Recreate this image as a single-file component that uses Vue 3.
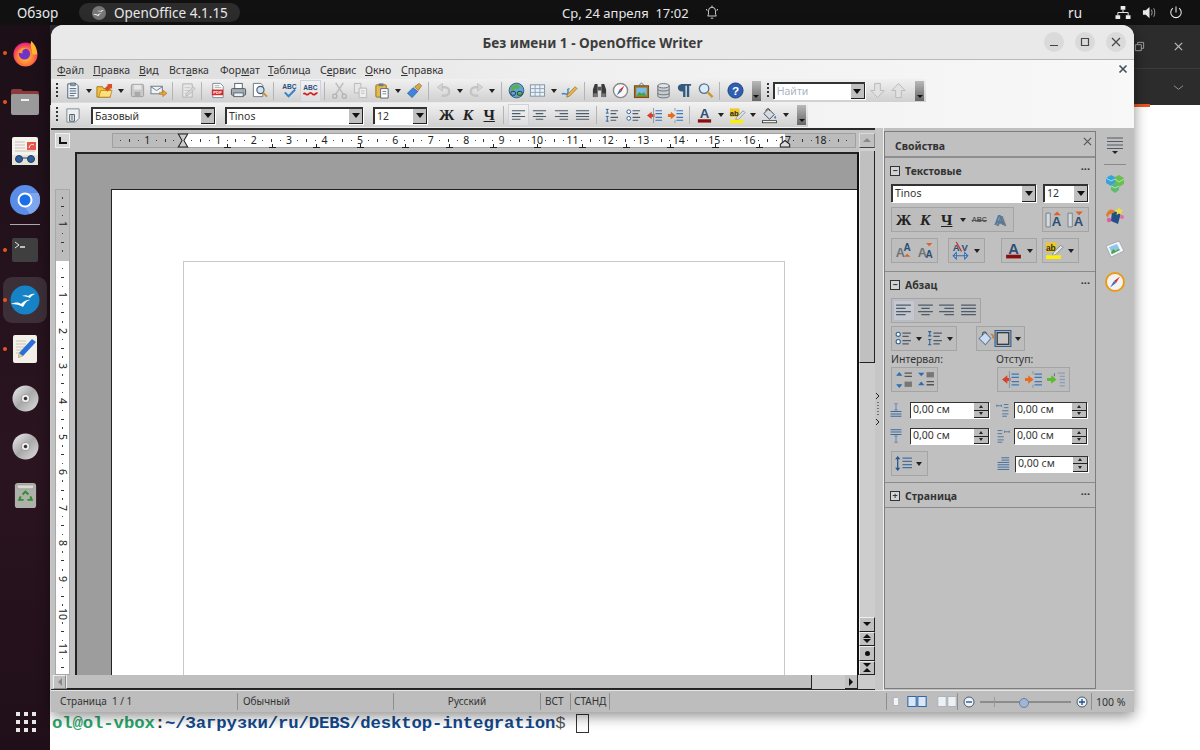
<template>
  <div class="screen">
    <!-- icon sprite, icons with letters live in textIcons below -->
    <svg class="sprite" aria-hidden="true">
      <defs>
        <radialGradient id="ffx" cx="0.5" cy="0.6" r="0.6"><stop offset="0" stop-color="#ffcf3a"/><stop offset="0.6" stop-color="#ff7139"/><stop offset="1" stop-color="#e31587"/></radialGradient>
        <linearGradient id="metal" x1="0" y1="0" x2="1" y2="1"><stop offset="0" stop-color="#f0f0f0"/><stop offset="0.5" stop-color="#a9a9a9"/><stop offset="1" stop-color="#e0e0e0"/></linearGradient>
      </defs>
      <symbol id="new" viewBox="0 0 18 18"><path d="M4 2h9l2 2v13H4z" fill="#f4f7fa" stroke="#4c5f72"/><path d="M6 7h7M6 9.5h7M6 12h7M6 14.5h5" stroke="#44607c"/><path d="M7 1h5v3H7z" fill="#8aa0b6" stroke="#3d4f60" stroke-width=".6"/></symbol>
      <symbol id="open" viewBox="0 0 18 18"><path d="M1 5h6l1 2h7v9H1z" fill="#f0c040" stroke="#a87a10"/><path d="M3 16l2-7h12l-2 7z" fill="#fbe07c" stroke="#a87a10" stroke-width=".7"/><path d="M9 7l4-4-2-1h6v6l-1-2-4 4z" fill="#d8502a"/></symbol>
      <symbol id="save" viewBox="0 0 18 18"><rect x="2.5" y="2.5" width="13" height="13" rx="1.5" fill="#c9c9c9" stroke="#9d9d9d"/><rect x="5" y="3" width="8" height="5" fill="#e6e6e6"/><rect x="6" y="10.5" width="6" height="5" fill="#a9a9a9"/></symbol>
      <symbol id="mail" viewBox="0 0 18 18"><rect x="1" y="4.5" width="12" height="8" fill="#f1f4f7" stroke="#6d7a87"/><path d="M1 5l6 4 6-4" fill="none" stroke="#6d7a87"/><path d="M10 11h3.500V8.500L18 12l-4.500 3.500V13H10z" fill="#eba033" stroke="#9d6a15" stroke-width=".5"/></symbol>
      <symbol id="edit" viewBox="0 0 18 18"><path d="M4 2h10v14H4z" fill="#e8e8e8" stroke="#b2b2b2"/><path d="M6 6h6M6 9h6M6 12h4" stroke="#c4c4c4"/><path d="M8 12l7-7 2 2-7 7-3 1z" fill="#d4d4d4" stroke="#aaa" stroke-width=".6"/></symbol>
      <symbol id="print" viewBox="0 0 18 18"><rect x="5" y="1.500" width="8" height="6" fill="#fff" stroke="#56626e"/><rect x="1.500" y="7" width="15" height="7" rx="1" fill="#a7b0b8" stroke="#4c5862"/><rect x="4" y="11.500" width="10" height="4" fill="#eef0f2" stroke="#56626e"/><circle cx="14" cy="9" r=".8" fill="#5cc45c"/></symbol>
      <symbol id="preview" viewBox="0 0 18 18"><path d="M2.500 1.500h8l2 2v12h-10z" fill="#fff" stroke="#6a7885"/><circle cx="10" cy="8.500" r="3.800" fill="#cfe4f5" stroke="#46586a" stroke-width="1.200"/><path d="M13 11.500l4 4" stroke="#c9962a" stroke-width="2.200"/></symbol>
      <symbol id="cut" viewBox="0 0 18 18"><path d="M5 1l8 12M13 1L5 13" stroke="#bdbdbd" stroke-width="1.600"/><circle cx="4" cy="15" r="2.200" fill="none" stroke="#b0b0b0" stroke-width="1.300"/><circle cx="14" cy="15" r="2.200" fill="none" stroke="#b0b0b0" stroke-width="1.300"/></symbol>
      <symbol id="copy" viewBox="0 0 18 18"><path d="M2.500 1.500h7v10h-7z" fill="#e6e6e6" stroke="#b8b8b8"/><path d="M7.500 6.500h8v10h-8z" fill="#eee" stroke="#b8b8b8"/><path d="M9.500 9.500h4M9.500 12h4" stroke="#c4c4c4"/></symbol>
      <symbol id="paste" viewBox="0 0 18 18"><rect x="2" y="3" width="11" height="13" rx="1" fill="#e5b94f" stroke="#977016"/><rect x="5" y="1.500" width="5" height="3" fill="#6d7b88"/><path d="M7 7h8v10H7z" fill="#fff" stroke="#566573"/><path d="M9 10h4M9 12.500h4" stroke="#6f7f8f"/></symbol>
      <symbol id="brush" viewBox="0 0 18 18"><path d="M1.500 12l6-6 5 4-6 6.500z" fill="#3f84d6" stroke="#1f5a9e" stroke-width=".7"/><path d="M9 5l5-3.500 2.500 2.500-3.500 5z" fill="#d9a64b" stroke="#8c6519" stroke-width=".7"/></symbol>
      <symbol id="undo" viewBox="0 0 18 18"><path d="M7 5.500h3.500a4.500 4.500 0 010 9H7" fill="none" stroke="#c4c4c4" stroke-width="2.600"/><path d="M8 1.500v8L2.500 5.500z" fill="#d4d4d4" stroke="#b2b2b2" stroke-width=".6"/></symbol>
      <symbol id="redo" viewBox="0 0 18 18"><path d="M11 5.500H7.500a4.500 4.500 0 000 9H11" fill="none" stroke="#c4c4c4" stroke-width="2.600"/><path d="M10 1.500v8l5.500-4z" fill="#d4d4d4" stroke="#b2b2b2" stroke-width=".6"/></symbol>
      <symbol id="nav" viewBox="0 0 18 18"><circle cx="9" cy="9" r="7.800" fill="#5fa6d8" stroke="#3a5a75"/><path d="M3 5c3-2 5-3 8-2l2 3-3 2-2-1-2 2-3 0zM9 11h6l-2 4-3 1z" fill="#5cae54"/><rect x="3" y="10" width="5" height="4" rx="1.500" fill="none" stroke="#283845"/><rect x="10" y="10" width="5" height="4" rx="1.500" fill="none" stroke="#283845"/></symbol>
      <symbol id="table" viewBox="0 0 18 18"><rect x="1.500" y="3" width="15" height="12" fill="#edf2f7" stroke="#7a91a8"/><path d="M1.500 7h15M1.500 11h15M6.500 3v12M11.500 3v12" stroke="#8aa1b8"/></symbol>
      <symbol id="draw" viewBox="0 0 18 18"><path d="M1 13c3-3 4 2 6-1s-2-4 2-5" fill="none" stroke="#3a82d2" stroke-width="1.500"/><path d="M7 13l8-8 2 2-8 8-3 1z" fill="#e9b748" stroke="#8f6510" stroke-width=".7"/></symbol>
      <symbol id="binoc" viewBox="0 0 18 18"><path d="M2 8l2-6h3v14H2zM16 8l-2-6h-3v14h5z" fill="#3a3a3a"/><rect x="7" y="5" width="4" height="4" fill="#555"/><rect x="2.500" y="12" width="4" height="4" fill="#777"/><rect x="11.500" y="12" width="4" height="4" fill="#777"/></symbol>
      <symbol id="compass" viewBox="0 0 18 18"><circle cx="9" cy="9" r="7.500" fill="#fafafa" stroke="#888" stroke-width="1.500"/><path d="M13 4L8 8l2 2z" fill="#d52d2d"/><path d="M5 14l3-6 2 2z" fill="#3b70b9"/></symbol>
      <symbol id="gallery" viewBox="0 0 18 18"><rect x="1.500" y="4" width="15" height="12.500" fill="#a97022" stroke="#6e4a12"/><rect x="3.500" y="6" width="11" height="8.500" fill="#79bce8"/><path d="M3.500 14.500l3-4 3 2 2-2 3 4z" fill="#4e9f3d"/><path d="M6 4l3-3 3 3" fill="none" stroke="#666"/></symbol>
      <symbol id="db" viewBox="0 0 18 18"><path d="M3 4v11c0 2.400 12 2.400 12 0V4z" fill="#c9ced3" stroke="#666d74"/><ellipse cx="9" cy="4" rx="6" ry="2.300" fill="#e2e5e8" stroke="#666d74"/><path d="M3 8c0 2 12 2 12 0M3 12c0 2 12 2 12 0" fill="none" stroke="#666d74"/></symbol>
      <symbol id="pilcrow" viewBox="0 0 18 18"><path d="M7 2h9v2h-2v12h-2.500V4H10v12H7.500V10C3 10 2 7.500 2 6s1-4 5-4z" fill="#34597f"/></symbol>
      <symbol id="zoom" viewBox="0 0 18 18"><circle cx="7.500" cy="7" r="5" fill="#d9ecfa" stroke="#59708a" stroke-width="1.400"/><path d="M11 10.500l5.500 5.500" stroke="#c99a2c" stroke-width="2.500"/></symbol>
      <symbol id="al" viewBox="0 0 18 18"><path d="M2 4h14M2 7h9M2 10h14M2 13h9" stroke="#4d5c6b" stroke-width="1.200"/></symbol>
      <symbol id="ac" viewBox="0 0 18 18"><path d="M2 4h14M5 7h8M2 10h14M5 13h8" stroke="#4d5c6b" stroke-width="1.200"/></symbol>
      <symbol id="ar" viewBox="0 0 18 18"><path d="M2 4h14M7 7h9M2 10h14M7 13h9" stroke="#4d5c6b" stroke-width="1.200"/></symbol>
      <symbol id="aj" viewBox="0 0 18 18"><path d="M2 4h14M2 7h14M2 10h14M2 13h14" stroke="#4d5c6b" stroke-width="1.200"/></symbol>
      <symbol id="numl" viewBox="0 0 18 18"><path d="M3 2.500h3M4.500 2.500v4M3 6.500h3M3 10h3M4.500 10v5M3 15h3" stroke="#2e5f96"/><path d="M8 4h8M8 7h6M8 11h8M8 14h6" stroke="#4d5c6b" stroke-width="1.200"/></symbol>
      <symbol id="bull" viewBox="0 0 18 18"><circle cx="4" cy="5" r="2" fill="#fff" stroke="#2e5f96"/><circle cx="4" cy="12" r="2" fill="#fff" stroke="#2e5f96"/><path d="M8 4h8M8 7h6M8 11h8M8 14h6" stroke="#4d5c6b" stroke-width="1.200"/></symbol>
      <symbol id="outd" viewBox="0 0 18 18"><path d="M1 9l5-4v2.500h3v3H6V13z" fill="#d8402a"/><path d="M10 4h7M10 7h7M10 11h7M10 14h7" stroke="#3a78bd" stroke-width="1.200"/><path d="M8 1v16" stroke="#8b98a5"/></symbol>
      <symbol id="indt" viewBox="0 0 18 18"><path d="M9 9L4 5v2.500H1v3h3V13z" fill="#e76b21"/><path d="M10 4h7M10 7h7M10 11h7M10 14h7" stroke="#3a78bd" stroke-width="1.200"/><path d="M8.500 1v3M8.500 14v3" stroke="#8b98a5"/></symbol>
      <symbol id="incr" viewBox="0 0 18 18"><path d="M9 9l-5-4v2.500H0v3h4V13z" fill="#5cba2e"/><path d="M10 3h7M12 6h5M12 9h5M12 12h5M12 15h5" stroke="#8aa0b8" stroke-width="1.200"/><path d="M7 3v3" stroke="#5d6f80"/></symbol>
      <symbol id="bgc" viewBox="0 0 18 18"><path d="M3 7l5-5 6 6-5 5z" fill="#d6dce2" stroke="#37444f"/><path d="M5 4c1-3 4-3 4 0" fill="none" stroke="#37444f"/><path d="M15 9c1.500 2 1.500 3 0 3.500-1.500-.5-1.500-1.500 0-3.500z" fill="#3d80c5"/><rect x="1.500" y="14.500" width="15" height="2.200" fill="#fff" stroke="#222" stroke-width=".8"/></symbol>
      <symbol id="down" viewBox="0 0 18 18"><path d="M6 1.500h6V9h4l-7 7.500L2 9h4z" fill="#e2e2e2" stroke="#b9b9b9"/></symbol>
      <symbol id="up" viewBox="0 0 18 18"><path d="M6 16.500h6V9h4L9 1.500 2 9h4z" fill="#e2e2e2" stroke="#b9b9b9"/></symbol>
      <symbol id="fill" viewBox="0 0 18 18"><path d="M2 9l6-6 5 6-5 6z" fill="#cbdcf0" stroke="#5f7d9e"/><path d="M5 6c0-4 4-4 4-1" fill="none" stroke="#555"/><path d="M13 5c2 0 3 2 2 4" fill="none" stroke="#d6762e" stroke-width="1.500"/></symbol>
      <symbol id="box" viewBox="0 0 18 18"><rect x="1" y="1.500" width="15" height="15" fill="none" stroke="#27578d"/><rect x="3" y="3.500" width="11" height="11" fill="#c5c5c5" stroke="#333" stroke-width="1.200"/></symbol>
      <symbol id="spup" viewBox="0 0 18 18"><path d="M5 2L2 5.500h6z" fill="#2e6cb3"/><path d="M5 17l-3-3.500h6z" fill="#2e6cb3"/><path d="M10 3h7M10 6h7" stroke="#555" stroke-width="1.300"/><path d="M10 11h7v5h-7z" fill="#777"/></symbol>
      <symbol id="spdn" viewBox="0 0 18 18"><path d="M5 6L2 2.500h6zM5 11l-3 3.500h6z" fill="#2e6cb3"/><path d="M10 2h7v5h-7z" fill="#777"/><path d="M10 11h7M10 14h7" stroke="#555" stroke-width="1.300"/></symbol>
      <symbol id="before" viewBox="0 0 18 18"><path d="M7 1h4M9 1v8M7 9h4" stroke="#4b78a8"/><path d="M2 11h14M2 14h14M2 17h14" stroke="#3b6a9e" stroke-width="1.300"/></symbol>
      <symbol id="after" viewBox="0 0 18 18"><path d="M2 1h14M2 4h14M2 7h14" stroke="#3b6a9e" stroke-width="1.300"/><path d="M7 9h4M9 9v8M7 17h4" stroke="#4b78a8"/></symbol>
      <symbol id="left" viewBox="0 0 18 18"><path d="M1 2v3M1 3.500h6M7 2v3" stroke="#446f9e"/><path d="M10 2h6M10 6h6M8 10h8M8 14h8M8 17h6" stroke="#4a739c" stroke-width="1.200"/></symbol>
      <symbol id="right" viewBox="0 0 18 18"><path d="M11 2v3M11 3.500h6M17 2v3" stroke="#446f9e"/><path d="M2 2h6M2 6h6M2 10h8M2 14h8M2 17h6" stroke="#4a739c" stroke-width="1.200"/></symbol>
      <symbol id="first" viewBox="0 0 18 18"><path d="M7 1h10M7 4h10M2 7h15M2 10h15M2 13h15M2 16h15" stroke="#3b6a9e" stroke-width="1.200"/></symbol>
      <symbol id="lines" viewBox="0 0 18 18"><path d="M3.500 3v12" stroke="#27578d" stroke-width="1.200"/><path d="M1 5l2.500-3L6 5zM1 13l2.500 3L6 13z" fill="#27578d"/><path d="M8 4h9M8 7h9M8 10h9M8 13h9" stroke="#456f9d" stroke-width="1.200"/></symbol>
      <symbol id="cube" viewBox="0 0 20 20"><path d="M1 5l5-3 4 2v6l-4 3-5-3z" fill="#37a4d8"/><path d="M10 4l4-2 5 3v6l-5 3-4-3z" fill="#6cc04a"/><path d="M6 12l4-2 4 2v5l-4 3-4-3z" fill="#5bbd6c"/><path d="M1 5l5 3 4-2M10 6l4 3 5-3M6 13l4 2 4-2" fill="none" stroke="#d6eef6" stroke-width=".7"/></symbol>
      <symbol id="stars" viewBox="0 0 20 20"><path d="M7 5l9 2-3 11-7-3z" fill="#254f86"/><path d="M1 9c2-6 7-7 9-3l-4 2c-2 0-3 2-3 4z" fill="#de7c2c"/><path d="M14 1l1 2.500 3 .5-2 2 .5 3-2.500-1.500L11.500 9l.5-3-2-2 3-.5z" fill="#ece03c"/><circle cx="4" cy="14" r="2.200" fill="#de5ea0"/><circle cx="17" cy="11" r="2" fill="#e66ba8"/></symbol>
      <symbol id="photo" viewBox="0 0 20 20"><path d="M1 7l13-5 5 10-13 6z" fill="#f4f6f8" stroke="#98a2ac" stroke-width=".8"/><path d="M4 8l8-3 3 6-8 4z" fill="#8ec6ea"/><path d="M6 14l2-4 3 2 2-2 2 1-8 4z" fill="#52a347"/></symbol>
      <symbol id="orange-compass" viewBox="0 0 20 20"><circle cx="10" cy="10" r="9" fill="#f3f3f3" stroke="#ec9a16" stroke-width="2"/><path d="M15 4.500L9 9l2 2z" fill="#d62f2f"/><path d="M5 15.500L9 9l2 2z" fill="#3673ba"/></symbol>
      <symbol id="hamb" viewBox="0 0 20 20"><path d="M2 2h16M2 5.500h16M2 9h16M2 12.500h16" stroke="#555c63" stroke-width="1.200"/><path d="M7 15h6l-3 3z" fill="#222"/></symbol>
      <!-- dock -->
      <symbol id="d-firefox" viewBox="0 0 28 28"><circle cx="14" cy="15" r="12.500" fill="url(#ffx)"/><path d="M20 1c5 5 6 9 6 14h-5c0-6-3-8-1-14z" fill="#ffb52e"/><circle cx="13" cy="14.500" r="5.800" fill="#6f33c8"/><path d="M6 13c2-4 5-6 10-4-4 0-6 2-5 5z" fill="#ff9a3a"/></symbol>
      <symbol id="d-files" viewBox="0 0 28 28"><path d="M0 3a2 2 0 012-2h8l2 2h14a2 2 0 012 2v5H0z" fill="#8b3a3c"/><rect x="0" y="6" width="28" height="21" rx="2" fill="#9a9a9a"/><rect x="10" y="11" width="8" height="2" fill="#f1f1f1"/></symbol>
      <symbol id="d-viewer" viewBox="0 0 28 28"><rect x="1" y="0" width="26" height="28" rx="2" fill="#f6f3ee"/><path d="M4 5h10M4 8h10M4 11h10M4 14h20" stroke="#c6c0b6"/><rect x="16" y="5" width="9" height="8" fill="#e6554a"/><path d="M18 11c1-4 3-4 5-3" fill="none" stroke="#fff"/><rect x="1" y="18" width="26" height="10" fill="#e7e2d6"/><circle cx="8" cy="22" r="3.500" fill="#2f5f9a" stroke="#1c3e6d"/><circle cx="20" cy="22" r="3.500" fill="#2f5f9a" stroke="#1c3e6d"/><path d="M11 21h6" stroke="#1c3e6d"/></symbol>
      <symbol id="d-chrome" viewBox="0 0 30 30"><circle cx="15" cy="15" r="15" fill="#5a8de8"/><path d="M15 8h13.500A15 15 0 0120 29L15 22z" fill="#7ea6ef"/><circle cx="15" cy="15" r="7.500" fill="#fff"/><circle cx="15" cy="15" r="5.500" fill="#1a6fe8"/></symbol>
      <symbol id="d-term" viewBox="0 0 26 24"><rect x="0" y="0" width="26" height="24" rx="2" fill="#3f3f3f"/><path d="M3 4l4 3-4 3" fill="none" stroke="#e8e8e8"/><path d="M8 9h5" stroke="#e8e8e8" stroke-width="1.500"/></symbol>
      <symbol id="d-ooo" viewBox="0 0 30 30"><circle cx="15" cy="15" r="14.500" fill="#1583c6"/><path d="M1 19c4-2 8-2 10 0 2-2 6-5 9-4-4 1-5 4-7 7-3-2-7-3-12-3z" fill="#fff"/><path d="M12 11c2-1 5-1 6 0 2-1 4-3 7-2-3 1-4 3-5 4-2-1-5-2-8-2z" fill="#fff"/></symbol>
      <symbol id="d-writer" viewBox="0 0 26 28"><rect x="1" y="0" width="24" height="28" rx="2" fill="#f3f0e8"/><path d="M4 6h10M4 9h10M4 12h10M4 15h8M4 18h7" stroke="#c9c4b8"/><path d="M6 23l1-5L20 4l4 3L11 21z" fill="#2a70d8"/><path d="M6 23l1-5 4 3z" fill="#efc48a"/></symbol>
      <symbol id="d-cd" viewBox="0 0 28 28"><circle cx="14" cy="14" r="13.500" fill="url(#metal)"/><circle cx="14" cy="14" r="4.200" fill="#eee" stroke="#999"/><circle cx="14" cy="14" r="1.800" fill="#333"/></symbol>
      <symbol id="d-trash" viewBox="0 0 24 28"><rect x="1" y="1" width="22" height="26" rx="3" fill="#aeb0aa"/><path d="M3 3h18l-1 4H4z" fill="#d9d9d4" stroke="#8b8d87" stroke-width=".6"/><g fill="none" stroke="#2d8e2d" stroke-width="2"><path d="M9 13l3-3 3 3"/><path d="M17 15l1.500 3.500H14"/><path d="M10 18.500H5.500L7 15"/></g></symbol>
    </svg>

    <header class="topbar">
      <span class="activities">Обзор</span>
      <span class="app-pill">
        <svg class="pill-icon" viewBox="0 0 30 30"><circle cx="15" cy="15" r="15" fill="#777"/><path d="M2 18c4-1 8-1 10 1 2-2 6-5 9-4-4 1-5 4-7 7-3-2-7-3-12-4zM12 11c2-1 5-1 6 0 2-1 4-3 7-2-3 1-4 3-5 4-2-1-5-2-8-2z" fill="#eee"/></svg>
        OpenOffice 4.1.15
      </span>
      <span class="clock">Ср, 24 апреля &nbsp;17:02</span>
      <svg class="bell" viewBox="0 0 16 18" fill="none" stroke="#e6e6e6"><path d="M3 13c1-1 1-2 1-6a4 4 0 018 0c0 4 0 5 1 6zM6.500 15.500h3M8 1v2M1.500 5l1 2M14.500 5l-1 2"/></svg>
      <span class="tray">
        <span class="lang">ru</span>
        <svg viewBox="0 0 16 16" class="tray-net"><path d="M5.500 1h5v4h-5zM0 11h5v4H0zM11 11h5v4h-5z" fill="#eee"/><path d="M8 5v3M2.500 11V8h11v3" fill="none" stroke="#eee"/></svg>
        <svg viewBox="0 0 16 16" class="tray-vol"><path d="M1 5.500h3L8 2v12l-4-3.500H1z" fill="#e8e8e8"/><path d="M10 5c1 2 1 4 0 6M12.500 3.500c1.500 3 1.500 6 0 9" fill="none" stroke="#aaa"/></svg>
        <svg viewBox="0 0 16 16" class="tray-pow" fill="none" stroke="#e8e8e8" stroke-width="1.200"><path d="M8 1v7M4.500 3a6 6 0 107 0"/></svg>
      </span>
    </header>

    <div class="below">
      <nav class="dock">
        <div v-for="(d, n) in dock" :key="n" class="dock-slot" :style="{ height: d.h + 'px' }" :class="{ active: d.active }">
          <i v-if="d.dot" class="dot"></i>
          <svg class="dock-ic" :style="{ width: d.w + 'px', height: d.w + 'px' }"><use :href="'#' + d.icon" /></svg>
          <i v-if="d.rule" class="dock-rule"></i>
        </div>
        <div class="apps-grid"><i v-for="n in 9" :key="n"></i></div>
      </nav>

      <main class="desktop">
        <!-- terminal behind the writer -->
        <section class="terminal">
          <div class="term-head">
            <div class="term-head-row">
              <svg class="term-btn" viewBox="0 0 12 12" fill="none" stroke="#aaa"><path d="M1.500 4h6.500v6.500H1.500zM4 4V1.500h6.500V8H8"/></svg>
              <svg class="term-btn" viewBox="0 0 12 12" fill="none" stroke="#bbb" stroke-width="1.300"><path d="M2 2l8 8M10 2l-8 8"/></svg>
            </div>
            <div class="term-head-row second">
              <svg class="term-btn" viewBox="0 0 12 12" fill="none" stroke="#999"><path d="M1 4l5 4 5-4"/></svg>
            </div>
            <i class="orange-tab"></i>
          </div>
          <div class="term-body">
            <div class="prompt"><span class="p-user">ol@ol-vbox</span>:<span class="p-path">~/Загрузки/ru/DEBS/desktop-integration</span><span class="p-sign">$</span><i class="cursor"></i></div>
          </div>
        </section>

        <!-- writer window -->
        <section class="writer">
          <div class="titlebar">
            <span class="win-title">Без имени 1 - OpenOffice Writer</span>
            <div class="win-btns">
              <span class="win-btn"><svg viewBox="0 0 12 12"><path d="M2 9.500h8" stroke="#444" stroke-width="1.200"/></svg></span>
              <span class="win-btn"><svg viewBox="0 0 12 12"><path d="M2.500 2.500h7v7h-7z" fill="none" stroke="#444" stroke-width="1.200"/></svg></span>
              <span class="win-btn"><svg viewBox="0 0 12 12"><path d="M2 2l8 8M10 2l-8 8" stroke="#444" stroke-width="1.200"/></svg></span>
            </div>
          </div>

          <div class="chrome">
            <div class="menubar">
              <span v-for="m in menus" :key="m.t" class="menu-item" :style="{ width: m.w + 'px' }"><span>{{ m.t.slice(0, m.u) }}</span><u>{{ m.t[m.u] }}</u><span>{{ m.t.slice(m.u + 1) }}</span></span>
              <svg class="doc-close" viewBox="0 0 10 10"><path d="M1.500 1.500l7 7M8.500 1.500l-7 7" stroke="#46535f" stroke-width="1.700"/></svg>
            </div>

            <div class="toolbar bar-one">
              <i class="grip"></i>
              <template v-for="(t, i) in row1" :key="i">
                <i v-if="t.sep" class="sep"></i>
                <i v-else-if="t.dd" class="dd"></i>
                <span v-else class="tool" :class="{ on: t.on }"><Ic :name="t.icon" /></span>
              </template>
              <span class="overflow"></span>
              <i class="grip second"></i>
              <span class="combo find"><span class="combo-text muted">Найти</span><b class="combo-arrow"></b></span>
              <span class="tool find-arrow"><Ic name="down" /></span>
              <span class="tool"><Ic name="up" /></span>
              <span class="overflow end"></span>
            </div>

            <div class="toolbar bar-two">
              <i class="grip"></i>
              <span class="tool style-ic"><Ic name="style" /></span>
              <span class="combo c-style"><span class="combo-text">Базовый</span><b class="combo-arrow"></b></span>
              <span class="combo c-font"><span class="combo-text">Tinos</span><b class="combo-arrow"></b></span>
              <span class="combo c-size"><span class="combo-text">12</span><b class="combo-arrow"></b></span>
              <span class="tool letter first-letter"><b>Ж</b></span>
              <span class="tool letter"><b><em>К</em></b></span>
              <span class="tool letter"><b><u>Ч</u></b></span>
              <template v-for="(t, i) in row2" :key="i">
                <i v-if="t.sep" class="sep"></i>
                <i v-else-if="t.dd" class="dd"></i>
                <span v-else class="tool" :class="{ on: t.on }"><Ic :name="t.icon" /></span>
              </template>
              <span class="overflow end two"></span>
            </div>
          </div>

          <div class="workspace">
            <div class="docarea">
              <div class="corner"><i></i></div>
              <div class="hruler">
                <div v-for="(c, i) in hCells" :key="i" class="r-cell">
                  <i class="r-dot"></i><i class="r-mid"></i><i class="r-dot"></i><span class="r-num">{{ c }}</span>
                </div>
                <i v-for="x in tabs" :key="x" class="tabstop" :style="{ left: x + 'px' }"></i>
                <svg class="indent" viewBox="0 0 12 16"><path d="M1 1h10L7 8l4 7H1l4-7z" fill="#ccc" stroke="#222" stroke-width="1.100"/></svg>
                <svg class="indent right" viewBox="0 0 12 16"><path d="M6 8l5 4v3H1v-3z" fill="#ddd" stroke="#222" stroke-width="1.100"/></svg>
              </div>
              <div class="vscroll">
                <span class="sb-btn plain"><i class="tri up"></i></span>
                <span class="sb-thumb"></span>
                <span class="sb-track"></span>
                <span class="sb-btn"><i class="tri"></i></span>
                <span class="sb-btn"><i class="tri up dbl"></i><i class="tri"></i></span>
                <span class="sb-btn"><i class="nav-dot"></i></span>
                <span class="sb-btn"><i class="tri dbl"></i><i class="tri up"></i></span>
              </div>
              <div class="vruler">
                <div v-for="(c, i) in vCells" :key="i" class="v-cell">
                  <i class="r-dot"></i><i class="v-mid"></i><i class="r-dot"></i><span class="v-num">{{ c }}</span>
                </div>
              </div>
              <div class="view">
                <div class="page"><div class="frame"></div></div>
              </div>
              <div class="hscroll">
                <span class="hs-btn left"><i class="tri-h"></i></span>
                <span class="hs-thumb"></span>
                <span class="hs-track"></span>
                <span class="hs-btn right"><i class="tri-h r"></i></span>
              </div>
            </div>

            <div class="splitter">
              <svg viewBox="0 0 6 34" fill="none" stroke="#222"><path d="M1 1l3 3-3 3M1 27l3 3-3 3"/><path d="M3 10v15" stroke-dasharray="1 2"/></svg>
            </div>

            <aside class="deck">
              <div class="deck-head">
                <span>Свойства</span>
                <svg viewBox="0 0 10 10"><path d="M1 1l8 8M9 1l-8 8" stroke="#555" stroke-width="1.300"/></svg>
              </div>

              <div class="section s-text">
                <div class="sec-title"><i class="toggle">−</i><b>Текстовые</b><span class="more">···</span></div>
                <div class="row">
                  <span class="combo s-font"><span class="combo-text">Tinos</span><b class="combo-arrow"></b></span>
                  <span class="combo s-size"><span class="combo-text">12</span><b class="combo-arrow"></b></span>
                </div>
                <div class="row between">
                  <span class="group">
                    <span class="g-tool letter"><b>Ж</b></span>
                    <span class="g-tool letter"><b><em>К</em></b></span>
                    <span class="g-tool letter"><b><u>Ч</u></b></span>
                    <i class="dd"></i>
                    <span class="g-tool abc">ABC</span>
                    <span class="g-tool"><Ic name="shadowa" /></span>
                  </span>
                  <span class="group">
                    <span class="g-tool"><Ic name="growr" /></span>
                    <span class="g-tool"><Ic name="shrinkr" /></span>
                  </span>
                </div>
                <div class="row">
                  <span class="group"><span class="g-tool"><Ic name="sup" /></span><span class="g-tool"><Ic name="sub" /></span></span>
                  <span class="group m10"><span class="g-tool"><Ic name="spacing" /></span><i class="dd"></i></span>
                  <span class="group m16"><span class="g-tool"><Ic name="fcol" /></span><i class="dd"></i></span>
                  <span class="group m5"><span class="g-tool"><Ic name="hl" /></span><i class="dd"></i></span>
                </div>
              </div>

              <div class="section s-para">
                <div class="sec-title"><i class="toggle">−</i><b>Абзац</b><span class="more">···</span></div>
                <div class="row tight">
                  <span class="group">
                    <span class="g-tool on"><Ic name="al" /></span>
                    <span class="g-tool"><Ic name="ac" /></span>
                    <span class="g-tool"><Ic name="ar" /></span>
                    <span class="g-tool"><Ic name="aj" /></span>
                  </span>
                </div>
                <div class="row list-row">
                  <span class="group"><span class="g-tool lst"><Ic name="bull" /></span><i class="dd"></i><span class="g-tool lst"><Ic name="numl" /></span><i class="dd"></i></span>
                  <span class="group m19"><span class="g-tool narrow"><Ic name="fill" /></span><span class="g-tool narrow"><Ic name="box" /></span><i class="dd"></i></span>
                </div>
                <div class="labels"><span class="lab-a">Интервал:</span><span>Отступ:</span></div>
                <div class="row indents">
                  <span class="group"><span class="g-tool"><Ic name="spup" /></span><span class="g-tool"><Ic name="spdn" /></span></span>
                  <span class="group"><span class="g-tool wide"><Ic name="outd" /></span><span class="g-tool wide"><Ic name="indt" /></span><span class="g-tool wide"><Ic name="incr" /></span></span>
                </div>
                <div class="spins">
                  <Ic class="sp-ic" name="before" />
                  <span class="spin sp-l"><span>0,00 см</span><b class="spin-btns"><i></i><i></i></b></span>
                  <Ic class="sp-ic sp-right" name="left" />
                  <span class="spin sp-r"><span>0,00 см</span><b class="spin-btns"><i></i><i></i></b></span>
                  <Ic class="sp-ic" name="after" />
                  <span class="spin sp-l"><span>0,00 см</span><b class="spin-btns"><i></i><i></i></b></span>
                  <Ic class="sp-ic sp-right" name="right" />
                  <span class="spin sp-r"><span>0,00 см</span><b class="spin-btns"><i></i><i></i></b></span>
                </div>
                <div class="last-row">
                  <span class="group"><span class="g-tool"><Ic name="lines" /></span><i class="dd"></i></span>
                  <Ic class="sp-ic first-ic" name="first" />
                  <span class="spin sp-r"><span>0,00 см</span><b class="spin-btns"><i></i><i></i></b></span>
                </div>
              </div>

              <div class="section s-page">
                <div class="sec-title"><i class="toggle">+</i><b>Страница</b><span class="more">···</span></div>
              </div>
            </aside>

            <div class="tabbar">
              <svg class="tab-ic hamb"><use href="#hamb" /></svg>
              <i class="tab-rule"></i>
              <svg class="tab-ic"><use href="#cube" /></svg>
              <svg class="tab-ic"><use href="#stars" /></svg>
              <svg class="tab-ic"><use href="#photo" /></svg>
              <svg class="tab-ic"><use href="#orange-compass" /></svg>
            </div>
          </div>

          <footer class="statusbar">
            <span class="st st-page">Страница &nbsp;1 / 1</span>
            <span class="st st-style">Обычный</span>
            <span class="st st-lang">Русский</span>
            <span class="st st-ins">ВСТ</span>
            <span class="st st-std">СТАНД</span>
            <span class="st st-gap"></span>
            <span class="st st-views">
              <svg viewBox="0 0 12 14"><path d="M2 1h6l2 2v10H2z" fill="#f2f5f8" stroke="#9aa6b2"/></svg>
              <span class="two-pages">
                <svg viewBox="0 0 12 14"><path d="M1 1h10v12H1z" fill="#dbe7f5" stroke="#2f68ad" stroke-width="1.300"/></svg>
                <svg viewBox="0 0 12 14"><path d="M1 1h10v12H1z" fill="#dbe7f5" stroke="#2f68ad" stroke-width="1.300"/></svg>
              </span>
              <span class="two-pages book">
                <svg viewBox="0 0 12 14"><path d="M1 1h10v12H1z" fill="#eef1f4" stroke="#a2adb8"/></svg>
                <svg viewBox="0 0 12 14"><path d="M1 1h10v12H1z" fill="#eef1f4" stroke="#a2adb8"/></svg>
              </span>
            </span>
            <span class="st st-zoom">
              <svg class="z-btn" viewBox="0 0 12 12"><circle cx="6" cy="6" r="5" fill="#eef2f6" stroke="#4c5a68"/><path d="M3 6h6" stroke="#1d4f8c" stroke-width="1.300"/></svg>
              <span class="z-track"><i class="z-mid"></i><i class="z-thumb"></i></span>
              <svg class="z-btn" viewBox="0 0 12 12"><circle cx="6" cy="6" r="5" fill="#eef2f6" stroke="#4c5a68"/><path d="M3 6h6M6 3v6" stroke="#1d4f8c" stroke-width="1.300"/></svg>
            </span>
            <span class="st-pct">100 %</span>
          </footer>
        </section>
      </main>
    </div>
  </div>
</template>

<script setup>
import { h } from 'vue'

const label = (x, y, size, fill, text, extra = '') =>
  `<text x="${x}" y="${y}" text-anchor="middle" font-size="${size}" font-weight="700" fill="${fill}" font-family="Liberation Sans" ${extra}>${text}</text>`

// icons that carry letters, drawn in place so their text stays where it shows
const textIcons = {
  pdf: `<path d="M4 1.500h8l3 3V16.500H4z" fill="#fff" stroke="#7c8891"/><rect x="3" y="8" width="12" height="6" fill="#d42a2a"/>${label(9, 13, 4.5, '#fff', 'PDF')}<path d="M6 4h5M6 6h7" stroke="#a0a8ae"/>`,
  spell: `${label(9, 7.5, 7, '#2a4f7c', 'ABC')}<path d="M4 11l4 4 7-7" fill="none" stroke="#3d83c9" stroke-width="2.200"/>`,
  autospell: `${label(9, 8.5, 7, '#2a4f7c', 'ABC')}<path d="M1.500 13c2-3 3 2 5 0s3-2 5 0 3-2 5-1" fill="none" stroke="#d22020" stroke-width="1.800"/>`,
  help: `<circle cx="9" cy="9" r="8" fill="#2f5fb0" stroke="#1d3f7e"/>${label(9, 13.5, 12.5, '#fff', '?')}`,
  style: `<path d="M3 2h13v10l-4 4H3z" fill="#eef0f2" stroke="#7c8894"/><path d="M6 8h5v7H6z" fill="#f8f8f8" stroke="#40505e"/>${label(8.5, 14, 7, '#40505e', 'i')}`,
  fcol: `${label(9, 12, 14, '#2c4f75', 'A')}<rect x="2" y="13" width="14" height="3.500" fill="#8b0e0e"/>`,
  hl: `<rect x="1" y="1.500" width="10" height="9" fill="#f0c820"/>${label(5.5, 9, 8, '#2b2b2b', 'ab')}<path d="M8 11l7-7 2 2-7 7-3 1z" fill="#dfe4e9" stroke="#6a7885" stroke-width=".7"/><rect x="1" y="13.500" width="14" height="3.500" fill="#ffef00"/>`,
  shadowa: label(8, 14.5, 14, '#4f7ba3', 'A', 'style="filter:drop-shadow(2px 1.500px 0 #70767c)"'),
  growr: `<path d="M1 3h4v13H1z" fill="#d4dae0" stroke="#6a7884" stroke-width=".8"/>${label(11, 15.5, 12.5, '#2c4f75', 'A')}<path d="M8 5l3.500-3.500L15 5z" fill="#d8642a"/>`,
  shrinkr: `<path d="M1 3h4v13H1z" fill="#d4dae0" stroke="#6a7884" stroke-width=".8"/>${label(11, 15.5, 12.5, '#2c4f75', 'A')}<path d="M8 1.500L11.500 5 15 1.500z" fill="#d8642a"/>`,
  sup: `${label(6, 15, 12, '#6d7378', 'A')}${label(12.5, 9, 9.5, '#2c4f75', 'A')}<path d="M9.500 15l3-3 3 3z" fill="#d8642a"/>`,
  sub: `${label(6, 15, 12, '#6d7378', 'A')}${label(12.5, 16, 9.5, '#2c4f75', 'A')}<path d="M9.500 2l3 3 3-3z" fill="#d8642a"/>`,
  spacing: `${label(5, 9, 9, '#2c4f75', 'A')}${label(13, 9, 9, '#2c4f75', 'V')}<path d="M5 1l5 9" stroke="#d02a2a" stroke-width="1.200"/><path d="M2 14h14M2 14l3-3v6zM16 14l-3-3v6z" fill="#fff" stroke="#2e6cb3"/>`,
}

// small svg icon: sprite reference or in-place letters
const Ic = (props) => h('svg', {
  class: 'ic',
  viewBox: '0 0 18 18',
  innerHTML: textIcons[props.name] || `<use href="#${props.name}"/>`,
})
Ic.props = ['name']

// parse a compact toolbar spec: "name", "name+" = with drop arrow, "|" = separator, "!" suffix = highlighted
function parseBar(spec) {
  const out = []
  for (const word of spec.split(' ')) {
    if (word === '|') { out.push({ sep: true }); continue }
    out.push({ icon: word.replace(/[!+]/g, ''), on: word.includes('!') })
    if (word.includes('+')) out.push({ dd: true })
  }
  return out
}

const row1 = parseBar('new+ open+ save mail | edit | pdf print preview | spell autospell! | cut copy paste+ brush | undo+ redo+ | nav table+ draw | binoc compass gallery db pilcrow zoom | help')
const row2 = parseBar('| al! ac ar aj | numl bull outd indt | fcol+ hl+ bgc+')

const menus = [
  { t: 'Файл', u: 0, w: 36 }, { t: 'Правка', u: 0, w: 46 }, { t: 'Вид', u: 0, w: 30 },
  { t: 'Вставка', u: 3, w: 51 }, { t: 'Формат', u: 3, w: 48 }, { t: 'Таблица', u: 0, w: 52 },
  { t: 'Сервис', u: 1, w: 45 }, { t: 'Окно', u: 0, w: 36 }, { t: 'Справка', u: 0, w: 50 },
]

const dock = [
  { icon: 'd-firefox', h: 48, w: 27, dot: true },
  { icon: 'd-files', h: 50, w: 28, dot: true },
  { icon: 'd-viewer', h: 48, w: 28 },
  { icon: 'd-chrome', h: 50, w: 30, rule: true },
  { icon: 'd-term', h: 50, w: 26, dot: true },
  { icon: 'd-ooo', h: 54, w: 30, dot: true, active: true },
  { icon: 'd-writer', h: 40, w: 28, dot: true },
  { icon: 'd-cd', h: 58, w: 27 },
  { icon: 'd-cd', h: 38, w: 27 },
  { icon: 'd-trash', h: 60, w: 27 },
]

const hCells = ['1', '', '1', '2', '3', '4', '5', '6', '7', '8', '9', '10', '11', '12', '13', '14', '15', '16', '17', '18', '']
const vCells = ['1', '', '1', '2', '3', '4', '5', '6', '7', '8', '9', '10', '11', '']
const tabs = Array.from({ length: 13 }, (_, i) => Math.round(71 + 44.3 * (i + 1)))
</script>

<style>
html, body { margin: 0; background: #fff; overflow: hidden; }
</style>

<style scoped>
.screen {
  width: 1200px;
  height: 750px;
  display: flex;
  flex-direction: column;
  overflow: hidden;
  font-family: "Noto Sans", sans-serif;
  color: #222;
}
.sprite { width: 0; height: 0; position: absolute; }
i { font-style: normal; }

/* top bar */
.topbar {
  height: 25px;
  flex: none;
  background: #111;
  color: #e8e8e8;
  display: flex;
  align-items: center;
  font-size: 13.5px;
  position: relative;
}
.activities { margin-left: 17px; width: 62px; }
.app-pill {
  width: 161px;
  height: 19px;
  border-radius: 10px;
  background: #2c2c2c;
  display: flex;
  align-items: center;
  gap: 8px;
  padding-left: 13px;
  box-sizing: border-box;
}
.pill-icon { width: 14px; height: 14px; flex: none; }
.clock { margin-left: 322px; width: 142px; white-space: nowrap; font-size: 13px; }
.bell { width: 14px; height: 17px; margin-left: 1px; }
.tray { margin-left: auto; display: flex; align-items: center; }
.lang { margin-right: 33px; }
.tray-net { width: 16px; height: 15px; margin-right: 11px; }
.tray-vol { width: 15px; height: 15px; margin-right: 12px; }
.tray-pow { width: 14px; height: 15px; margin-right: 17px; }

.below { flex: 1; display: flex; min-height: 0; }

/* dock */
.dock {
  width: 50px;
  flex: none;
  background: linear-gradient(180deg, #1c0f17, #2a1420 60%, #200f19);
  display: flex;
  flex-direction: column;
  padding-top: 4px;
  box-sizing: border-box;
  position: relative;
}
.dock-slot {
  position: relative;
  display: flex;
  align-items: center;
  justify-content: center;
  flex: none;
}
.dock-slot.active::before {
  content: "";
  position: absolute;
  left: 3px;
  right: 3px;
  top: 2px;
  height: 46px;
  border-radius: 9px;
  background: #3d2f38;
}
.dock-slot.active .dock-ic { margin-top: -4px; }
.dock-slot.active .dot { top: 23px; }
.dock-ic { position: relative; }
.dot {
  position: absolute;
  left: 3px;
  top: calc(50% - 2px);
  width: 4px;
  height: 4px;
  border-radius: 50%;
  background: #e95420;
}
.dock-rule {
  position: absolute;
  left: 10px;
  right: 10px;
  bottom: 0;
  height: 1px;
  background: #aaa;
}
.apps-grid {
  position: absolute;
  left: 16px;
  top: 687px;
  display: grid;
  grid-template-columns: repeat(3, 4px);
  gap: 4px;
}
.apps-grid i { height: 4px; background: #e8e8e8; }

/* desktop + terminal */
.desktop { flex: 1; position: relative; min-width: 0; }
.terminal {
  height: 100%;
  display: flex;
  flex-direction: column;
  background: #fff;
}
.term-head {
  height: 80px;
  background: #2c2c2c;
  flex: none;
  position: relative;
}
.term-head-row {
  height: 43px;
  display: flex;
  align-items: center;
  justify-content: flex-end;
  gap: 28px;
  padding-right: 16px;
  border-bottom: 1px solid #3c3c3c;
}
.term-head-row.second { height: 36px; border: 0; }
.term-btn { width: 11px; height: 11px; }
.orange-tab {
  position: absolute;
  left: 1084px;
  bottom: -2px;
  width: 16px;
  height: 3px;
  background: #e95420;
}
.term-body {
  flex: 1;
  display: flex;
  align-items: flex-end;
  padding-bottom: 16px;
}
.prompt {
  font-family: "Liberation Mono", monospace;
  font-weight: 700;
  font-size: 17.3px;
  letter-spacing: -0.1px;
  line-height: 20px;
  color: #333;
  white-space: pre;
  display: flex;
  align-items: center;
  padding-left: 2px;
}
.p-user { color: #2aa46a; }
.p-path { color: #12488b; }
.p-sign { color: #555; font-weight: 400; }
.cursor {
  display: inline-block;
  width: 11px;
  height: 17px;
  border: 1px solid #333;
  margin: -2px 0 0 10px;
}

/* writer window */
.writer {
  position: absolute;
  left: 1px;
  top: 0;
  width: 1083px;
  height: 687px;
  border-radius: 12px 12px 0 0;
  background: #bfbfbf;
  box-shadow: 0 4px 14px rgba(0, 0, 0, 0.45);
  display: flex;
  flex-direction: column;
  overflow: hidden;
}
.titlebar {
  height: 34px;
  flex: none;
  background: #e9e9e9;
  border-bottom: 1px solid #b9b9b9;
  display: flex;
  align-items: center;
  justify-content: center;
  position: relative;
}
.win-title { font-size: 13.6px; font-weight: 700; color: #3d3d3d; }
.win-btns {
  position: absolute;
  right: 8px;
  top: 7px;
  display: flex;
  gap: 11px;
}
.win-btn {
  width: 20px;
  height: 20px;
  border-radius: 50%;
  background: #dadada;
  display: flex;
  align-items: center;
  justify-content: center;
}
.win-btn svg { width: 12px; height: 12px; }

.chrome {
  height: 68px;
  flex: none;
  background: linear-gradient(90deg, #d9d9d9, #efefef 45%, #f8f8f8);
  font-size: 10.5px;
}
.menubar {
  height: 19px;
  display: flex;
  align-items: center;
  padding-left: 6px;
  position: relative;
  color: #333;
}
.menu-item { flex: none; white-space: nowrap; }
.menu-item u { text-underline-offset: 1px; }
.doc-close { position: absolute; right: 6px; top: 4px; width: 10px; height: 10px; }

.toolbar {
  height: 24px;
  display: flex;
  align-items: center;
  padding-left: 3px;
  box-sizing: border-box;
  background: linear-gradient(180deg, #f1f1f1, #d0d0d0);
}
.bar-one { width: 875px; height: 23px; margin-bottom: 1px; }
.bar-two { width: 757px; }
.grip {
  width: 2px;
  height: 16px;
  margin: 0 4px 0 2px;
  flex: none;
  background: repeating-linear-gradient(180deg, #333 0 2px, transparent 2px 4px);
}
.grip.second { margin: 0 5px 0 6px; }
.tool {
  width: 21.3px;
  height: 22px;
  flex: none;
  display: flex;
  align-items: center;
  justify-content: center;
  box-sizing: border-box;
}
.tool.on { background: rgba(255, 255, 255, 0.25); border: 1px solid #cdd2de; }
.ic { width: 18px; height: 18px; flex: none; display: block; }
.bar-one .ic, .bar-two .ic { width: 17px; height: 17px; }
.sep { width: 8px; height: 18px; flex: none; position: relative; }
.sep::after {
  content: "";
  position: absolute;
  left: 3px;
  top: 0;
  bottom: 0;
  width: 1px;
  background: #b4b4b4;
}
.dd { width: 11px; flex: none; display: flex; justify-content: center; }
.dd::after {
  content: "";
  border: 3px solid transparent;
  border-top: 4px solid #222;
  border-bottom: 0;
}
.overflow {
  width: 9px;
  height: 20px;
  flex: none;
  margin-left: 6px;
  background: linear-gradient(180deg, #b9b9b9, #666);
  display: flex;
  align-items: flex-end;
  justify-content: center;
  padding-bottom: 3px;
  box-sizing: border-box;
}
.overflow::after {
  content: "";
  border: 3px solid transparent;
  border-top: 3px solid #111;
  border-bottom: 0;
}
.overflow.two { margin-left: 6px; }

/* combos */
.combo {
  display: flex;
  flex: none;
  height: 17px;
  background: #fff;
  box-sizing: border-box;
  border-top: 2px solid #333;
  border-left: 2px solid #333;
  box-shadow: 1px 1px 0 #fff;
  font-size: 10.5px;
  color: #333;
}
.combo-text { flex: 1; padding-left: 2px; line-height: 14px; }
.combo-text.muted { color: #aab4c0; }
.combo-arrow {
  width: 14px;
  flex: none;
  background: #c0c0c0;
  border-right: 1px solid #222;
  border-bottom: 1px solid #222;
  display: flex;
  align-items: center;
  justify-content: center;
  box-sizing: border-box;
}
.combo-arrow::after {
  content: "";
  border: 4px solid transparent;
  border-top: 5px solid #111;
  border-bottom: 0;
}
.find { width: 92px; margin-left: -1px; }
.find-arrow { margin-left: 2px; }
.style-ic { margin-right: 2px; width: 21px; }
.c-style { width: 124px; margin-left: 6px; }
.c-font { width: 138px; margin-left: 10px; }
.c-size { width: 54px; margin-left: 10px; }
.letter b { font-family: "Liberation Serif", serif; font-size: 15.5px; line-height: 18px; color: #222; }
.first-letter { margin-left: 9px; }

/* document area */
.workspace { flex: 1; display: flex; min-height: 0; }
.docarea {
  width: 824px;
  flex: none;
  display: grid;
  grid-template-columns: 24px 784px 16px;
  grid-template-rows: 22px 1fr 14px;
  background: #c2c2c2;
  border-top: 2px solid #2a2a2a;
  border-bottom: 1px solid #2a2a2a;
  box-sizing: border-box;
  overflow: hidden;
}
.corner {
  grid-column: 1;
  grid-row: 1;
  width: 15px;
  height: 15px;
  margin: 3px 0 0 4px;
  background: #d6d6d6;
  border: 1px solid #f2f2f2;
  box-sizing: border-box;
  display: flex;
  align-items: center;
  justify-content: center;
}
.corner i {
  width: 6px;
  height: 5px;
  border-left: 2px solid #111;
  border-bottom: 2px solid #111;
}
.hruler {
  grid-column: 2;
  grid-row: 1;
  margin: 3px 0 0 37px;
  width: 744px;
  height: 15px;
  position: relative;
  display: flex;
  padding-left: 4.43px;
  box-sizing: border-box;
  background: linear-gradient(90deg, #bcbcbc 71px, #fff 71px, #fff 673px, #bcbcbc 673px);
  outline: 1px solid #a0a0a0;
  outline-offset: -1px;
  overflow: hidden;
}
.r-cell { width: 35.43px; flex: none; display: flex; height: 100%; align-items: center; }
.r-cell > * { width: 8.857px; flex: none; text-align: center; }
.r-dot::after { content: ""; display: block; width: 1px; height: 1.5px; background: #444; margin: 0 auto; }
.r-mid::after { content: ""; display: block; width: 1px; height: 3px; background: #333; margin: 0 auto; }
.r-num { font-size: 10.5px; line-height: 15px; color: #222; display: flex; justify-content: center; white-space: nowrap; }
.tabstop {
  position: absolute;
  bottom: 0;
  width: 7px;
  height: 4px;
  margin-left: -3px;
  background: linear-gradient(#222, #222) center top / 1px 100% no-repeat, linear-gradient(#222, #222) center bottom / 100% 1px no-repeat;
}
.indent { position: absolute; left: 65px; top: 0; width: 12px; height: 15px; }
.indent.right { left: 667px; }

.vruler {
  grid-column: 1;
  grid-row: 2;
  margin: 37px 0 0 4px;
  width: 15px;
  height: 486px;
  padding-top: 4.43px;
  box-sizing: border-box;
  background: linear-gradient(180deg, #bcbcbc 72px, #fff 72px);
  overflow: hidden;
  outline: 1px solid #a8a8a8;
  outline-offset: -1px;
}
.v-cell { height: 35.43px; display: flex; flex-direction: column; align-items: center; }
.v-cell > * { height: 8.857px; flex: none; display: flex; align-items: center; justify-content: center; }
.v-mid::after { content: ""; display: block; width: 3px; height: 1px; background: #333; }
.v-num { font-size: 10.5px; writing-mode: vertical-rl; white-space: nowrap; color: #222; width: 15px; }

.view {
  grid-column: 2;
  grid-row: 2;
  background: #9d9d9d;
  border-top: 2px solid #222;
  border-left: 2px solid #222;
  border-right: 2px solid #111;
  padding: 35px 0 0 34px;
  display: flex;
  min-height: 0;
  overflow: hidden;
}
.page {
  flex: 1;
  background: #fff;
  border-top: 1px solid #222;
  border-left: 1px solid #222;
  padding: 71px 72px 0 71px;
  display: flex;
}
.frame { flex: 1; border: 1px solid #c9c9c9; border-bottom: 0; }

.vscroll {
  grid-column: 3;
  grid-row: 1 / 3;
  display: flex;
  flex-direction: column;
  margin-top: 3px;
  background: #cfcfcf;
}
.sb-btn {
  height: 14.5px;
  flex: none;
  background: #c0c0c0;
  border-right: 1px solid #222;
  border-bottom: 1px solid #222;
  border-top: 1px solid #eee;
  border-left: 1px solid #eee;
  box-sizing: border-box;
  display: flex;
  flex-direction: column;
  align-items: center;
  justify-content: center;
}
.sb-btn.plain { border-color: #dcdcdc #888 #444 #dcdcdc; margin-bottom: 3px; }
.sb-thumb {
  height: 212px;
  flex: none;
  background: #c0c0c0;
  border-right: 1px solid #222;
  border-bottom: 1px solid #222;
  border-left: 1px solid #e8e8e8;
  box-sizing: border-box;
}
.sb-track { flex: 1; background: #cdcdcd; border-left: 1px solid #e8e8e8; }
.tri { width: 0; height: 0; border: 4px solid transparent; border-top: 4px solid #111; border-bottom: 0; }
.tri.up { border-top: 0; border-bottom: 4px solid #111; }
.tri.dbl { margin-bottom: 1px; }
.plain .tri.up { border-bottom-color: #888; }
.nav-dot { width: 5px; height: 5px; border-radius: 50%; background: #111; }

.hscroll {
  grid-column: 1 / 4;
  grid-row: 3;
  display: flex;
  padding-left: 2px;
  background: #cbcbcb;
}
.hs-btn {
  width: 13px;
  flex: none;
  background: #c0c0c0;
  display: flex;
  align-items: center;
  justify-content: center;
  box-sizing: border-box;
}
.hs-btn.left { border: 1px solid #eee; border-right-color: #888; border-bottom-color: #888; }
.hs-btn.right { border-right: 1px solid #222; border-bottom: 1px solid #222; margin-right: 17px; }
.tri-h { width: 0; height: 0; border: 4px solid transparent; border-right: 4px solid #888; border-left: 0; }
.tri-h.r { border-right: 0; border-left: 4px solid #111; }
.hs-thumb {
  width: 746px;
  flex: none;
  background: #c0c0c0;
  border-left: 1px solid #eee;
  border-right: 1px solid #222;
  border-bottom: 1px solid #222;
  box-sizing: border-box;
}
.hs-track { flex: 1; }

.splitter {
  width: 9px;
  flex: none;
  background: #c6c6c6;
  display: flex;
  align-items: center;
  box-sizing: border-box;
  border-right: 1px solid #eee;
}
.splitter svg { width: 6px; height: 34px; }

/* sidebar */
.deck {
  width: 212px;
  flex: none;
  margin: 3px 0 1px;
  background: #c0c0c0;
  border: 1px solid #7d7d7d;
  box-sizing: border-box;
  color: #333;
  display: flex;
  flex-direction: column;
}
.deck-head {
  height: 26px;
  flex: none;
  border-bottom: 2px solid #8f8f8f;
  box-sizing: border-box;
  display: flex;
  align-items: center;
  justify-content: space-between;
  padding: 3px 3px 0 10px;
  font-size: 10.5px;
  font-weight: 700;
}
.deck-head svg { width: 9px; height: 9px; margin-top: -9px; }
.section { border-bottom: 1px solid #8a8a8a; padding: 0 6px; flex: none; box-sizing: border-box; }
.s-text { height: 114px; }
.s-para { height: 211px; }
.s-page { height: 25px; }
.sec-title {
  height: 26px;
  display: flex;
  align-items: center;
  font-size: 10.5px;
  position: relative;
}
.toggle {
  width: 8px;
  height: 8px;
  border: 1px solid #333;
  background: #d4d4d4;
  font-size: 9px;
  line-height: 7px;
  text-align: center;
  margin-right: 5px;
  font-weight: 700;
  margin-left: -1px;
}
.more { position: absolute; right: -1px; top: 3px; font-weight: 700; font-size: 11px; }
.row { display: flex; margin-bottom: 5px; }
.row.between { justify-content: space-between; width: 198px; margin-bottom: 6px; }
.row.tight { margin-bottom: 3px; }
.row.list-row { margin-bottom: 0; }
.row.indents { gap: 59px; margin-bottom: 0; }
.s-font { width: 145px; height: 18px; }
.s-size { width: 45px; height: 18px; margin-left: 7px; }
.group {
  height: 25px;
  display: inline-flex;
  align-items: center;
  flex: none;
  padding: 0 1px;
  border: 1.5px solid #a4a4a4;
  box-sizing: border-box;
  background: #bdbdbd;
}
.g-tool {
  width: 21.5px;
  height: 21px;
  display: flex;
  align-items: center;
  justify-content: center;
  flex: none;
  box-sizing: border-box;
}
.g-tool.lst { width: 20px; }
.g-tool.narrow { width: 17px; }
.g-tool.wide { width: 23px; }
.g-tool.on { border: 1px solid #b4bacb; background: #c6c8cf; }
.group .ic { width: 19px; height: 19px; }
.abc { font-size: 7px; font-weight: 700; text-decoration: line-through; color: #555; font-family: "Liberation Sans", sans-serif; }
.m10 { margin-left: 10px; }
.m16 { margin-left: 16px; }
.m5 { margin-left: 5px; }
.m19 { margin-left: 19px; }
.labels { height: 16px; display: flex; font-size: 10.5px; line-height: 16px; }
.lab-a { width: 105px; }
.spins {
  display: grid;
  grid-template-columns: 18px 80px 25px 73px;
  row-gap: 10px;
  margin-top: 10px;
  align-items: center;
}
.sp-ic { width: 14px; height: 16px; margin-left: -2px; }
.sp-ic.sp-right { margin-left: 7px; }
.spin {
  height: 16px;
  display: flex;
  background: #fff;
  box-sizing: border-box;
  border-top: 1.5px solid #333;
  border-left: 1.5px solid #333;
  box-shadow: 1px 1px 0 #fff;
  font-size: 10.5px;
  color: #333;
  line-height: 13px;
  padding-left: 2px;
  justify-content: space-between;
}
.spin > span { white-space: nowrap; }
.sp-l { width: 79px; margin-left: 1px; }
.sp-r { width: 73px; }
.spin-btns { width: 15px; display: flex; flex-direction: column; background: #bcbcbc; flex: none; }
.spin-btns i { flex: 1; display: flex; align-items: center; justify-content: center; border-bottom: 1px solid #222; border-right: 1px solid #222; }
.spin-btns i::after { content: ""; border: 2px solid transparent; }
.spin-btns i:first-child::after { border-top: 0; border-bottom: 3px solid #222; }
.spin-btns i:last-child::after { border-bottom: 0; border-top: 3px solid #222; }
.last-row { display: flex; align-items: center; margin-top: 7px; }
.last-row .group { width: 37px; }
.last-row .g-tool { width: 20px; }
.sp-ic.first-ic { margin-left: 68px; margin-right: 5px; }

.tabbar {
  flex: 1;
  display: flex;
  flex-direction: column;
  align-items: center;
  padding-top: 8px;
}
.tab-ic { width: 20px; height: 20px; flex: none; margin-bottom: 13px; }
.tab-ic.hamb { margin-bottom: 8px; }
.tab-rule { width: 22px; height: 1px; background: #8a8a8a; margin-bottom: 8px; }

/* status bar */
.statusbar {
  height: 22px;
  flex: none;
  display: flex;
  align-items: center;
  background: #bdbdbd;
  font-size: 10px;
  color: #333;
  border-top: 1px solid #e6e6e6;
  box-sizing: border-box;
}
.st {
  height: 17px;
  border-right: 1px solid #8e8e8e;
  box-sizing: border-box;
  flex: none;
  line-height: 17px;
  white-space: nowrap;
  overflow: hidden;
}
.st-page { width: 187px; padding-left: 9px; }
.st-style { width: 156px; padding-left: 5px; }
.st-lang { width: 147px; text-align: center; }
.st-ins { width: 30px; padding-left: 4px; }
.st-std { width: 39px; padding-left: 3px; }
.st-gap { width: 277px; }
.st-views {
  width: 71px;
  display: flex;
  align-items: center;
  padding-left: 5px;
  gap: 7px;
}
.st-views svg { width: 11px; height: 13px; }
.two-pages { display: flex; }
.two-pages svg { width: 10px; }
.two-pages.book { margin-left: 3px; }
.st-zoom {
  width: 134px;
  display: flex;
  align-items: center;
  padding-left: 5px;
  gap: 5px;
}
.z-btn { width: 12px; height: 12px; flex: none; }
.z-track {
  width: 91px;
  height: 2px;
  background: #8c8c8c;
  position: relative;
  flex: none;
}
.z-mid { position: absolute; left: 14px; top: -4px; width: 1px; height: 10px; background: #9a9a9a; }
.z-thumb {
  position: absolute;
  left: 39px;
  top: -3px;
  width: 8px;
  height: 8px;
  border-radius: 50%;
  background: #9cb6dc;
  border: 1px solid #6f7f93;
}
.st-pct { margin-left: 4px; font-size: 10.5px; white-space: nowrap; }
</style>
